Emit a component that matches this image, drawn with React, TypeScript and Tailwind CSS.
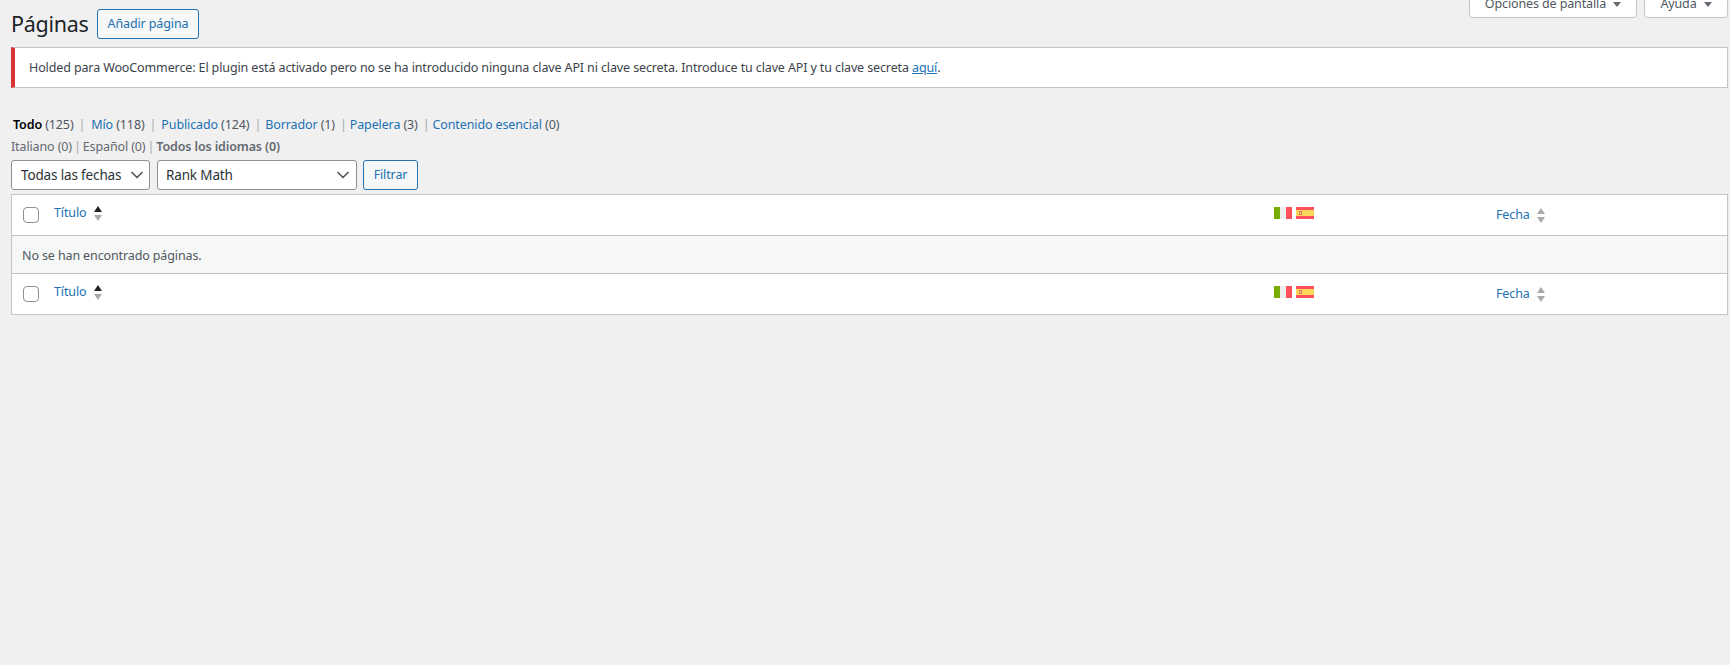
import { ChevronDown } from 'lucide-react';

const font = "font-['Noto_Sans',sans-serif]";

function ItalyFlag() {
  return (
    <svg width="18" height="12" viewBox="0 0 18 12" className="block">
      <rect width="6" height="12" fill="#78ad00" />
      <rect x="6" width="6" height="12" fill="#eeeeee" />
      <rect x="12" width="6" height="12" fill="#ff4f5a" />
    </svg>
  );
}

function SpainFlag() {
  return (
    <svg width="18" height="12" viewBox="0 0 18 12" className="block">
      <rect width="18" height="12" fill="#ff4f5a" />
      <rect y="3" width="18" height="6" fill="#fbd85a" />
      <rect x="3" y="4" width="3" height="4" fill="#e8734f" />
      <rect x="4" y="5" width="1" height="2" fill="#f7e8c8" />
    </svg>
  );
}

function SortArrows({ active = false }: { active?: boolean }) {
  return (
    <svg width="8" height="15" viewBox="0 0 8 15" className="block">
      <path d="M4 0 L8 6 L0 6 Z" fill={active ? '#1d2327' : '#a7aaad'} />
      <path d="M4 15 L8 9 L0 9 Z" fill="#a7aaad" />
    </svg>
  );
}

function DownTriangle() {
  return (
    <svg width="8" height="5" viewBox="0 0 8 5" className="block">
      <path d="M0 0 L8 0 L4 5 Z" fill="#646970" />
    </svg>
  );
}

function Checkbox() {
  return <span className="block h-4 w-4 rounded-[4px] border border-[#8c8f94] bg-white" />;
}

function TableRow({ border }: { border: string }) {
  return (
    <div className={`flex h-[41px] items-center bg-white ${border}`}>
      <div className="ml-[11px] w-[28px]">
        <Checkbox />
      </div>
      <div className="flex w-[1223px] items-center gap-[8px] pl-[3px] pb-[3px]">
        <a className="text-[#2271b1]">Título</a>
        <SortArrows active />
      </div>
      <div className="flex w-[222px] gap-1 pb-[5px]">
        <ItalyFlag />
        <SpainFlag />
      </div>
      <div className="flex items-center gap-[7px] pt-[1px]">
        <a className="text-[#2271b1]">Fecha</a>
        <SortArrows />
      </div>
    </div>
  );
}

function ViewLink({ label, count, gap, last }: { label: string; count: number; gap?: string; last?: boolean }) {
  return (
    <span className={gap}>
      <a className="text-[#2271b1]">{label}</a> <span className="text-[#50575e]">({count})</span>
      {!last && <span className="ml-[5px] text-[#a7aaad]">|</span>}
    </span>
  );
}

function Select({ label, width, padding }: { label: string; width: string; padding: string }) {
  return (
    <div className={`flex h-[30px] items-center justify-between rounded-[3px] border border-[#8c8f94] bg-white text-[13.5px] tracking-[-0.15px] whitespace-nowrap text-[#2c3338] ${width} ${padding}`}>
      <span>{label}</span>
      <ChevronDown size={20} strokeWidth={2} className="text-[#50575e]" />
    </div>
  );
}

export default function App() {
  return (
    <div className={`relative h-[665px] overflow-hidden bg-[#f0f0f1] pl-[11px] pr-[2px] text-[12.5px] tracking-[-0.12px] text-[#3c434a] ${font}`}>
      {/* Screen options tabs, cut off at the top */}
      <div className="absolute right-[2px] top-[-10px] flex gap-[7px] text-[#50575e]">
        <div className="flex h-[28px] w-[168px] items-center justify-center gap-[7px] rounded-b-[4px] border border-[#c3c4c7] bg-white">
          <span>Opciones de pantalla</span>
          <DownTriangle />
        </div>
        <div className="flex h-[28px] w-[84px] items-center justify-center gap-[7px] rounded-b-[4px] border border-[#c3c4c7] bg-white">
          <span>Ayuda</span>
          <DownTriangle />
        </div>
      </div>

      <div className="flex items-center gap-2 pt-[9px]">
        <h1 className="w-[78px] text-[21.5px] leading-[30px] tracking-[-0.3px] whitespace-nowrap text-[#1d2327]">Páginas</h1>
        <button className="h-[30px] w-[102px] rounded-[3px] border border-[#2271b1] bg-[#f6f7f7] text-[#2271b1]">
          Añadir página
        </button>
      </div>

      <div className="mt-2 flex h-[41px] items-center border border-l-4 border-[#c3c4c7] border-l-[#d63638] bg-white pt-[1px] pl-[14px]">
        <p>
          Holded para WooCommerce: El plugin está activado pero no se ha introducido ninguna clave API ni clave secreta. Introduce tu clave API y tu clave secreta{' '}
          <a className="text-[#2271b1] underline">aquí</a>.
        </p>
      </div>

      <div className="mt-[27px] flex h-[20px] items-center pl-[2px]">
        <span className="mr-[6px]">
          <strong className="font-semibold text-black">Todo</strong> <span className="text-[#50575e]">(125)</span>
          <span className="ml-[5px] text-[#a7aaad]">|</span>
        </span>
        <ViewLink label="Mío" count={118} gap="mr-[5px]" />
        <ViewLink label="Publicado" count={124} gap="mr-[4px]" />
        <ViewLink label="Borrador" count={1} gap="mr-[3px]" />
        <ViewLink label="Papelera" count={3} gap="mr-[3px]" />
        <ViewLink label="Contenido esencial" count={0} last />
      </div>

      <div className="mt-[2px] flex h-[20px] items-center gap-[2px] text-[#646970]">
        <span>Italiano (0)</span>
        <span className="text-[#a7aaad]">|</span>
        <span>Español (0)</span>
        <span className="text-[#a7aaad]">|</span>
        <strong className="font-semibold">Todos los idiomas (0)</strong>
      </div>

      <div className="mt-[3px] flex">
        <Select label="Todas las fechas" width="w-[139px]" padding="pl-[9px] pr-[2px]" />
        <Select label="Rank Math" width="ml-[7px] w-[200px]" padding="pl-2 pr-[3px]" />
        <button className="ml-[6px] h-[30px] w-[55px] rounded-[3px] border border-[#2271b1] bg-[#f6f7f7] text-[#2271b1]">Filtrar</button>
      </div>

      <div className="mt-[4px] border border-[#c3c4c7]">
        <TableRow border="border-b border-[#c3c4c7]" />
        <div className="flex h-[37px] items-center bg-[#f6f7f7] pt-[4px] pl-[10px] text-[#50575e]">No se han encontrado páginas.</div>
        <TableRow border="border-t border-[#c3c4c7]" />
      </div>
    </div>
  );
}
